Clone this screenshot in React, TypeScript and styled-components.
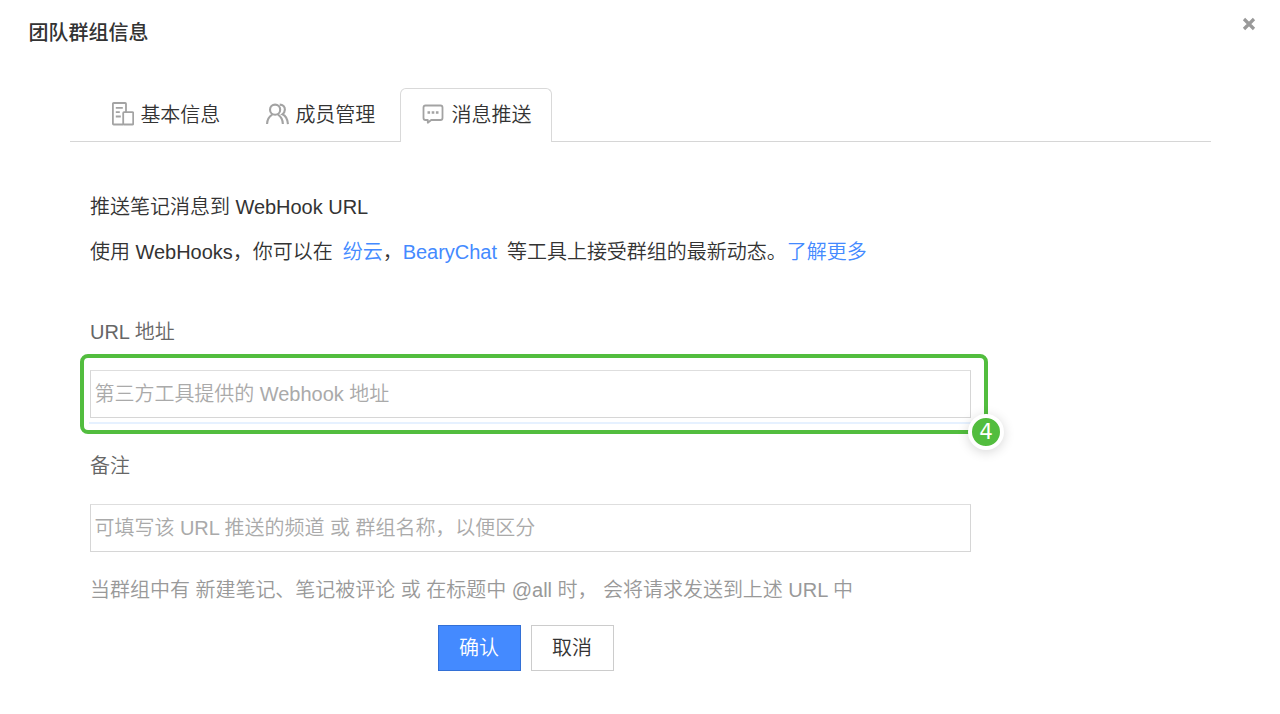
import React from "react";
import styled, { createGlobalStyle } from "styled-components";

const GlobalStyle = createGlobalStyle`
  * { box-sizing: border-box; }
  body {
    margin: 0;
    background: #fff;
    color: #333;
    font: 350 20px/28px "Liberation Sans", "Noto Sans CJK SC", sans-serif;
    letter-spacing: -0.02px;
  }
`;

const Dialog = styled.main`
  width: 1280px;
  height: 714px;
  overflow: hidden;
  background: #fff;
`;

const Header = styled.header`
  display: flex;
  justify-content: space-between;
  align-items: flex-start;
  height: 88px;
  padding: 17px 24px 0 28.500px;
`;

const Title = styled.h1`
  margin: 2px 0 0;
  font-size: 20px;
  line-height: 28px;
  font-weight: 500;
`;

const Close = styled.button`
  display: flex;
  padding: 0;
  border: 0;
  background: none;
`;

const Tabs = styled.nav`
  display: flex;
  width: 1141px;
  height: 54px;
  margin-left: 70px;
  padding-left: 42px;
  box-shadow: inset 0 -1px #d6d6d6;
`;

const Tab = styled.div<{ $width: number; $gap: number; $active?: boolean }>`
  display: flex;
  align-items: center;
  gap: ${(p) => p.$gap}px;
  width: ${(p) => p.$width}px;
  padding-left: ${(p) => (p.$active ? 20.5 : 0)}px;
  padding-bottom: ${(p) => (p.$active ? 1 : 0)}px;
  background: ${(p) => (p.$active ? "#fff" : "transparent")};
  border: solid #d9d9d9;
  border-width: ${(p) => (p.$active ? "1px 1px 0" : "0")};
  border-radius: 6px 6px 0 0;
  white-space: nowrap;
  svg { flex: none; margin-bottom: 2px; }
`;

const Panel = styled.section`
  display: flex;
  flex-direction: column;
  align-items: flex-start;
  padding: 51px 0 0 90px;
`;

const Line = styled.p<{ $gap: number; $top?: number; $color?: string }>`
  margin: ${(p) => p.$top || 0}px 0 ${(p) => p.$gap}px;
  height: 28px;
  color: ${(p) => p.$color || "#333"};
  white-space: pre;
`;

const Link = styled.a<{ $before?: number; $after?: number }>`
  color: #448aff;
  margin-left: ${(p) => p.$before || 0}px;
  margin-right: ${(p) => p.$after || 0}px;
`;

const Highlight = styled.div`
  position: relative;
  width: 908px;
  height: 80px;
  margin: 0 0 18px -10px;
  padding: 12px 6px 0;
  border: 4px solid #52bd3e;
  border-radius: 8px;
`;

const Input = styled.input`
  display: block;
  width: 881px;
  height: 48px;
  padding: 1px 3.500px 0;
  border: 1px solid #d6d6d6;
  border-top-color: #dedede;
  border-radius: 0;
  background: #fff;
  font: inherit;
  letter-spacing: -0.03px;
  outline: none;
  &::placeholder { color: #aaa; opacity: 1; }
`;

const Underline = styled.div`
  width: 882px;
  height: 2px;
  margin: 4px 0 0 -1px;
  background: #e6f1ff;
`;

const Step = styled.span`
  position: absolute;
  right: -20px;
  bottom: -20px;
  width: 36px;
  height: 36px;
  border: 4px solid #fff;
  border-radius: 50%;
  background: #52bd3e;
  box-shadow: 0 2px 12px rgba(0, 0, 0, 0.16);
  color: #fff;
  font: 400 21.500px/28px "DejaVu Sans", sans-serif;
  text-align: center;
`;

const Actions = styled.div`
  display: flex;
  gap: 10px;
  margin-left: 348px;
`;

const Button = styled.button<{ $primary?: boolean }>`
  width: 83px;
  height: 46px;
  padding: 0 1px 0 0;
  font: inherit;
  color: ${(p) => (p.$primary ? "#fff" : "#333")};
  background: ${(p) => (p.$primary ? "#448aff" : "#fff")};
  border: 1px solid ${(p) => (p.$primary ? "#3370d6" : "#ccc")};
  border-radius: 0;
`;

const InfoIcon = () => (
  <svg width="22" height="24" viewBox="0.500 0 22 24" fill="none" stroke="#a3a3a3" strokeWidth="1.800">
    <path d="M11.700 22.500H2.200q-.8 0-.8-.8V1.800q0-.8.8-.8h11.500q.8 0 .8.8v8.400" />
    <rect x="11.700" y="10.200" width="10" height="12.300" rx=".8" />
    <path d="M4.300 5.800h7M4.300 10.200h4M4.300 14.500h5" />
  </svg>
);

const MembersIcon = () => (
  <svg width="23" height="22" viewBox="0 0 24 22" fill="none" stroke="#a3a3a3" strokeWidth="2.200">
    <circle cx="9.500" cy="6.500" r="5.300" />
    <path d="M1.100 21.500c.1-4.500 1.800-7.700 5.400-9.900M12.500 11.600c3.300 2.100 5 5.200 5.100 9.900" />
    <path d="M14.300 1.200c3.400 0 5.500 2.300 5.400 5.200-.1 2.300-1 3.900-2.600 4.900 3.600 1.600 5.400 5 5.800 10.200" />
  </svg>
);

const MessageIcon = () => (
  <svg width="22" height="20" viewBox="0 0 22 20" fill="none" stroke="#a3a3a3" strokeWidth="1.800">
    <path d="M3.500 1.500h15q2 0 2 2v10.500q0 2-2 2H9.200L5.800 18.800V16H3.500q-2 0-2-2V3.500q0-2 2-2Z" strokeLinejoin="round" />
    <path d="M5.500 8.500h2.600M9.700 8.500h2.600M13.900 8.500h2.600" strokeWidth="2.400" />
  </svg>
);

export default function App() {
  return (
    <>
      <GlobalStyle />
      <Dialog>
        <Header>
          <Title>团队群组信息</Title>
          <Close aria-label="关闭">
            <svg width="14" height="14" viewBox="0 0 14 14" stroke="#999" strokeWidth="3.200">
              <path d="m2 2 10 10M12 2 2 12" />
            </svg>
          </Close>
        </Header>
        <Tabs>
          <Tab $width={154} $gap={6.4}><InfoIcon />基本信息</Tab>
          <Tab $width={134} $gap={6.4}><MembersIcon />成员管理</Tab>
          <Tab $width={152} $gap={8} $active><MessageIcon />消息推送</Tab>
        </Tabs>
        <Panel>
          <Line $gap={17}>推送笔记消息到 WebHook URL</Line>
          <Line $gap={52}>
            使用 WebHooks，你可以在<Link $before={10}>纷云</Link>，<Link $after={10}>BearyChat</Link>等工具上接受群组的最新动态。<Link>了解更多</Link>
          </Line>
          <Line $gap={8} $color="#666">URL 地址</Line>
          <Highlight>
            <Input placeholder="第三方工具提供的 Webhook 地址" />
            <Underline />
            <Step>4</Step>
          </Highlight>
          <Line $gap={24} $color="#666">备注</Line>
          <Input placeholder="可填写该 URL 推送的频道 或 群组名称，以便区分" />
          <Line $gap={21} $top={24} $color="#999">
            当群组中有 新建笔记、笔记被评论 或 在标题中 @all 时， 会将请求发送到上述 URL 中
          </Line>
          <Actions>
            <Button $primary>确认</Button>
            <Button>取消</Button>
          </Actions>
        </Panel>
      </Dialog>
    </>
  );
}
